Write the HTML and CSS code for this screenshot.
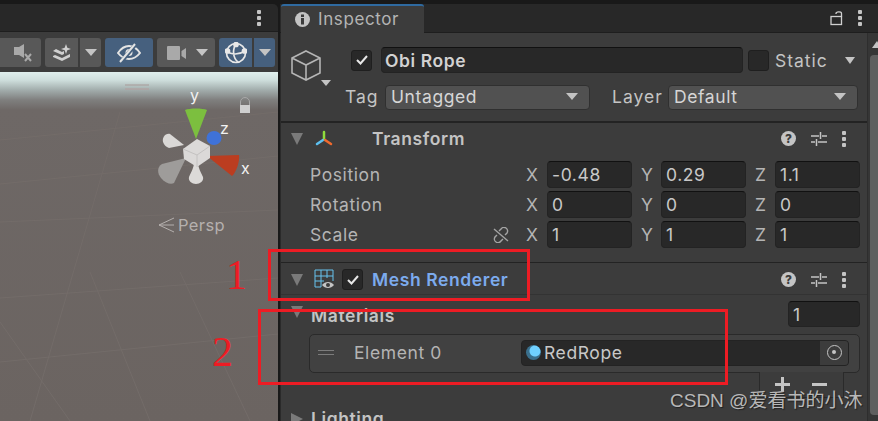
FILE: index.html
```html
<!DOCTYPE html>
<html lang="en">
<head>
  <meta charset="UTF-8" />
  <title>Inspector</title>
  <link rel="stylesheet" href="styles.css">
</head>
<body>
  <div class="app">
    <section class="scene">
      <div class="scene-tabs"><span class="dots"><i></i><i></i><i></i></span></div>
      <div class="scene-tools">
        <div class="tool tool-first">
          <svg width="20" height="18" viewBox="0 0 20 18"><path d="M0 3h5l5-3v14l-5-3H0z" fill="#a9a9a9"/><path d="M11 10l6 7M17 10l-6 7" stroke="#a9a9a9" stroke-width="2"/></svg>
        </div>
        <div class="tool tool-layers">
          <svg width="20" height="18" viewBox="0 0 20 18"><path d="M1 7l3-2 6 3 2-1v3l-2 1-9-4zM1 12l2-1 7 3 8-4v3l-8 4-9-4z" fill="#d0d0d0"/><path d="M14 0l1.300 3.700L19 5l-3.700 1.300L14 10l-1.300-3.700L9 5l3.700-1.300z" fill="#d0d0d0"/></svg>
        </div>
        <div class="tool tool-arrow"><b class="tri"></b></div>
        <div class="tool tool-eye on">
          <svg width="24" height="20" viewBox="0 0 24 20"><path d="M1 10c4-6 8-7 11-7s7 1 11 7c-4 5-8 6-11 6s-7-1-11-6z" fill="none" stroke="#e4e4e4" stroke-width="2"/><circle cx="12" cy="9.500" r="3.500" fill="#e4e4e4"/><path d="M4 19L19 1" stroke="#46607e" stroke-width="4"/><path d="M3 19L18 1" stroke="#e4e4e4" stroke-width="2"/></svg>
        </div>
        <div class="tool tool-cam">
          <svg width="20" height="14" viewBox="0 0 20 14"><rect width="13" height="14" rx="1" fill="#a9a9a9"/><path d="M14.500 5l4.500-3v11l-4.500-3z" fill="#a9a9a9"/></svg>
          <b class="tri"></b>
        </div>
        <div class="tool tool-gizmo on">
          <svg width="22" height="22" viewBox="0 0 22 22" fill="none" stroke="#e8e8e8" stroke-width="1.700"><circle cx="11" cy="11" r="9.500"/><path d="M2 9c4 4 12 4 18 0M11 2C7 8 8 16 13 20"/><circle cx="11" cy="2.500" r="2" fill="#e8e8e8"/><circle cx="2.500" cy="9" r="2" fill="#e8e8e8"/><circle cx="19.500" cy="9" r="2" fill="#e8e8e8"/></svg>
        </div>
        <div class="tool tool-arrow on"><b class="tri"></b></div>
      </div>
      <div class="viewport">
        <svg class="grid" width="278" height="349" viewBox="0 0 278 349" fill="none" stroke="#736c69" stroke-width="1">
          <path d="M0 68L278 40M0 112L278 84M0 150L278 138M0 226L278 206M0 290L278 262"/>
          <path d="M30 349L120 40M150 349L90 200M250 349L180 200M0 250L70 349"/>
        </svg>
        <svg class="gizmo" width="160" height="125" viewBox="0 0 160 125">
          <path d="M5 5H29" stroke="#a89a98" stroke-width="1"/><path d="M5 9H29" stroke="#b59c9c" stroke-width="1"/>
          <path d="M120.500 26v-4a4.500 4.500 0 0 1 9 0v4" fill="none" stroke="#a8a8a8" stroke-width="1"/><rect x="120" y="25" width="10" height="8" fill="#cfcfcf"/>
          <path d="M65 30c4-2 18-2 22 0L76 59z" fill="#7cbf3f"/>
          <ellipse cx="94" cy="58" rx="7.500" ry="7" fill="#3f72d8"/>
          <path d="M87 76l32-1c1 6-3 18-7 21z" fill="#bb3d20"/>
          <path d="M64 65L50 54c-5-1-8 4-7 8 1 3 3 5 6 6z" fill="#dad8d6"/>
          <path d="M66 78L42 84c-5 3-5 9-1 14 4 5 10 7 13 5z" fill="#9e9c9a"/>
          <path d="M74 82c0 6-3 10-5 15-1 4 3 7 7 7s8-3 7-7c-2-5-5-9-5-15z" fill="#dcdad8"/>
          <path d="M63 69l14-10 13 7v12l-13 9-13-8z" fill="#dbd9d8"/>
          <path d="M63 69l14 6 13-9M77 75v12" fill="none" stroke="#c4c2c1" stroke-width="1"/>
          <text x="70" y="21" class="axis">y</text>
          <text x="100" y="54" class="axis">z</text>
          <text x="121" y="94" class="axis">x</text>
        </svg>
        <div class="persp">
          <svg width="16" height="16" viewBox="0 0 16 16" fill="none" stroke="#b5b0ae" stroke-width="1"><path d="M16 1L1 8l15 7M1 8h15"/></svg>
          <span>Persp</span>
        </div>
      </div>
    </section>

    <section class="inspector">
      <div class="insp-tabs">
        <div class="insp-tab">
          <svg width="15" height="15" viewBox="0 0 15 15"><circle cx="7.500" cy="7.500" r="7.500" fill="#c4c4c4"/><rect x="6" y="6" width="3" height="6.500" fill="#3c3c3c"/><rect x="6" y="2.500" width="3" height="2.500" fill="#3c3c3c"/></svg>
          <span>Inspector</span>
        </div>
        <div class="insp-tab-tools">
          <svg width="13" height="16" viewBox="0 0 13 16" fill="none" stroke="#d0d0d0" stroke-width="1.300"><rect x="1" y="6.500" width="10.500" height="8"/><path d="M6 4V3.500C6 1.500 11.500 1 11.500 3.500V6.500"/></svg>
          <span class="dots"><i></i><i></i><i></i></span>
        </div>
      </div>
      <div class="insp-main">
        <div class="insp-body">
          <div class="go-head">
            <div class="cube-col">
              <svg width="30" height="31" viewBox="0 0 30 31" fill="none" stroke="#b5b5b5" stroke-width="1.600"><path d="M15 1l14 7v15l-14 7-14-7V8zM1 8l14 7 14-7M15 15v15"/></svg>
              <b class="tri tri-sm"></b>
            </div>
            <div class="go-rows">
              <div class="go-row">
                <span class="check"><svg class="tick" width="12" height="10" viewBox="0 0 12 10"><path d="M1 5l3.500 3.500L11 1" fill="none" stroke="#e8e8e8" stroke-width="2"/></svg></span>
                <div class="field name-field">Obi Rope</div>
                <span class="check"></span>
                <span class="static lbl-wide">Static</span>
                <b class="tri tri-static"></b>
              </div>
              <div class="go-row tag-row">
                <span class="lbl lbl-wide tag-lbl">Tag</span>
                <div class="drop tag-drop">Untagged<b class="tri"></b></div>
                <span class="lbl lbl-wide layer-lbl">Layer</span>
                <div class="drop layer-drop">Default<b class="tri"></b></div>
              </div>
            </div>
          </div>

          <div class="comp-head transform-head">
            <b class="tri fold"></b>
            <svg class="comp-icon" width="20" height="18" viewBox="0 0 20 18" fill="none" stroke-width="2.500" stroke-linecap="round"><path d="M10 2v7" stroke="#8fdc3c"/><path d="M9 10l-6 4" stroke="#5cc0f0"/><path d="M11 10l6 4" stroke="#ef6a2e"/></svg>
            <span class="comp-title transform-title">Transform</span>
            <span class="comp-tools">
              <span class="help">?</span>
              <svg width="16" height="14" viewBox="0 0 16 14" stroke="#c4c4c4" stroke-width="1.500"><path d="M0 4h8M11 4h5M0 10h4M7 10h9M9.500 0v7M5.500 7v7"/></svg>
              <span class="dots"><i></i><i></i><i></i></span>
            </span>
          </div>
          <div class="vec-rows">
            <div class="vec-row">
              <span class="vec-name">Position</span>
              <span class="axis-lbl">X</span><div class="field num">-0.48</div>
              <span class="axis-lbl">Y</span><div class="field num">0.29</div>
              <span class="axis-lbl">Z</span><div class="field num">1.1</div>
            </div>
            <div class="vec-row">
              <span class="vec-name">Rotation</span>
              <span class="axis-lbl">X</span><div class="field num">0</div>
              <span class="axis-lbl">Y</span><div class="field num">0</div>
              <span class="axis-lbl">Z</span><div class="field num">0</div>
            </div>
            <div class="vec-row">
              <span class="vec-name">Scale</span>
              <svg class="link" width="18" height="16" viewBox="0 0 18 16" fill="none" stroke="#a4a4a4" stroke-width="1.400"><path d="M7 4l2-2a3.500 3.500 0 0 1 6 4l-2 2M11 12l-2 2a3.500 3.500 0 0 1-6-4l2-2M2 2l14 12"/></svg>
              <span class="axis-lbl">X</span><div class="field num">1</div>
              <span class="axis-lbl">Y</span><div class="field num">1</div>
              <span class="axis-lbl">Z</span><div class="field num">1</div>
            </div>
          </div>

          <div class="comp-head mesh-head">
            <b class="tri fold"></b>
            <svg class="comp-icon" width="21" height="21" viewBox="0 0 21 21" fill="none"><path d="M1 1h18v11M1 1v17h6M7 1v17M13 1v8M1 7h18M1 12h9" stroke="#66c3ee" stroke-width="1"/><path d="M8 16c3-4 9-4 12 0-3 4-9 4-12 0z" fill="#c4c4c4"/><circle cx="14" cy="16" r="2" fill="#3c3c3c"/></svg>
            <span class="check"><svg class="tick" width="12" height="10" viewBox="0 0 12 10"><path d="M1 5l3.500 3.500L11 1" fill="none" stroke="#e8e8e8" stroke-width="2"/></svg></span>
            <span class="comp-title mesh-title">Mesh Renderer</span>
            <span class="comp-tools">
              <span class="help">?</span>
              <svg width="16" height="14" viewBox="0 0 16 14" stroke="#c4c4c4" stroke-width="1.500"><path d="M0 4h8M11 4h5M0 10h4M7 10h9M9.500 0v7M5.500 7v7"/></svg>
              <span class="dots"><i></i><i></i><i></i></span>
            </span>
          </div>
          <div class="mat-head">
            <b class="tri fold"></b>
            <span class="bold-lbl">Materials</span>
            <div class="field num count">1</div>
          </div>
          <div class="element">
            <span class="handle"></span>
            <span class="el-name">Element 0</span>
            <div class="obj-field">
              <span class="ball"></span>
              <span class="obj-name">RedRope</span>
              <span class="picker"><i></i></span>
            </div>
          </div>
          <div class="plusminus"><i class="plus"></i><i class="minus"></i></div>
          <div class="lighting">
            <b class="tri-right"></b>
            <span class="bold-lbl">Lighting</span>
          </div>
        </div>
        <div class="scrollbar"><b class="tri-up"></b><div class="thumb"></div></div>
      </div>
    </section>
  </div>

  <div class="mark box1"></div>
  <div class="mark box2"></div>
  <span class="mark-num num1">1</span>
  <span class="mark-num num2">2</span>
  <span class="watermark">CSDN @爱看书的小沐</span>
</body>
</html>
```

FILE: styles.css
```css
* { margin: 0; padding: 0; box-sizing: border-box; }
html, body { width: 878px; height: 421px; overflow: hidden; }
body {
  position: relative;
  font-family: 'Inter', 'Noto Sans', sans-serif;
  font-size: 17.500px;
  letter-spacing: 0.6px;
  color: #c4c4c4;
  background: #191919;
}
.app { display: flex; height: 421px; padding-top: 4px; overflow: hidden; }

/* shared bits */
.dots { display: inline-flex; flex-direction: column; gap: 2px; }
.dots i { width: 4px; height: 4px; background: #c4c4c4; border-radius: 1px; }
.tri {
  display: block;
  width: 0;
  height: 0;
  border-left: 6px solid transparent;
  border-right: 6px solid transparent;
  border-top: 7px solid #c4c4c4;
}
.tri.fold { border-top-color: #7a7a7a; border-left-width: 6.500px; border-right-width: 6.500px; border-top-width: 12px; }
.tri-right {
  display: block;
  width: 0;
  height: 0;
  border-top: 6px solid transparent;
  border-bottom: 6px solid transparent;
  border-left: 12px solid #7a7a7a;
}

/* scene side */
.scene { width: 278px; display: flex; flex-direction: column; flex: none; }
.scene-tabs {
  height: 28px;
  background: #282828;
  border-bottom: 1px solid #1e1e1e;
  border-radius: 0 5px 0 0;
  display: flex;
  align-items: center;
  justify-content: flex-end;
  padding-right: 17px;
}
.scene-tools {
  height: 40px;
  background: #3c3c3c;
  display: flex;
  align-items: center;
  gap: 4px;
  padding-top: 1px;
}
.tool {
  height: 29px;
  background: #585858;
  border-radius: 3px;
  display: flex;
  align-items: center;
  justify-content: center;
}
.tool.on { background: #46607e; }
.tool-first { width: 41px; border-radius: 0 3px 3px 0; padding-left: 6px; }
.tool-layers { width: 33px; border-radius: 3px 0 0 3px; }
.tool-arrow { width: 21px; margin-left: -2px; border-radius: 0 3px 3px 0; }
.tool-eye { width: 48px; }
.tool-cam { width: 58px; gap: 9px; padding-left: 2px; }
.tool-gizmo { width: 33px; border-radius: 3px 0 0 3px; }
.viewport {
  flex: 1;
  position: relative;
  overflow: hidden;
  background:
    linear-gradient(to bottom, #e0efed 0, #cfdfdd 8px, #a2adac 18px, #7f7f7e 28px, #6e6866 38px, #6b6461 100%);
}
.grid { position: absolute; left: 0; top: 0; }
.gizmo { position: absolute; left: 120px; top: 8px; }
.axis { font-size: 16px; fill: #f2f2f2; letter-spacing: 0; }
.persp {
  position: absolute;
  left: 158px;
  top: 143px;
  display: flex;
  align-items: center;
  gap: 4px;
  color: #b5b0ae;
  font-size: 16.500px;
  letter-spacing: 0.4px;
}

/* inspector */
.inspector {
  flex: 1;
  margin-left: 2px;
  display: flex;
  flex-direction: column;
  min-width: 0;
}
.insp-tabs {
  height: 29px;
  flex: none;
  background: #282828;
  border-bottom: 1px solid #1e1e1e;
  display: flex;
  justify-content: space-between;
  align-items: center;
  padding-left: 1px;
  padding-right: 16px;
}
.insp-tab {
  width: 143px;
  height: 29px;
  background: #3c3c3c;
  border-top: 2px solid #2f6aa0;
  border-radius: 3px 3px 0 0;
  display: flex;
  align-items: center;
  gap: 8px;
  padding-left: 14px;
  font-size: 17px;
  color: #b4b4b4;
}
.insp-tab-tools { display: flex; align-items: center; gap: 15px; }
.insp-main { flex: 1; display: flex; min-height: 0; overflow: hidden; background: #3c3c3c; border-left: 1px solid #2a2a2a; }
.insp-body { flex: 1; min-width: 0; overflow: hidden; }
.scrollbar {
  width: 11px;
  flex: none;
  background: #363636;
  border-left: 1px solid #2e2e2e;
}
.tri-up {
  display: block;
  width: 0;
  height: 0;
  margin: 8px 0 0 4px;
  border-left: 5px solid transparent;
  border-right: 5px solid transparent;
  border-bottom: 7px solid #c4c4c4;
}
.thumb { margin: 7px 0 0 2px; height: 360px; background: #5f5f5f; border-radius: 4px 0 0 4px; }

.go-head {
  height: 90px;
  display: flex;
  padding: 14px 0 0 10px;
  border-bottom: 2px solid #232323;
}
.cube-col { width: 60px; position: relative; flex: none; padding-top: 3px; }
.tri-sm {
  position: absolute;
  left: 30px;
  top: 33px;
  border-left-width: 5px;
  border-right-width: 5px;
  border-top-width: 6px;
}
.go-rows { flex: 1; }
.go-row { display: flex; align-items: center; height: 26px; }
.tag-row { margin-top: 11px; }
.check {
  width: 21px;
  height: 21px;
  background: #282828;
  border: 1px solid #1f1f1f;
  border-radius: 3px;
  display: inline-flex;
  align-items: center;
  justify-content: center;
  flex: none;
}
.field {
  background: #282828;
  border: 1px solid #232323;
  border-top: 1px solid #111;
  border-radius: 4px;
  display: flex;
  align-items: center;
  color: #d2d2d2;
}
.name-field {
  width: 362px;
  height: 26px;
  margin: 0 5px 0 9px;
  padding-left: 3px;
  font-weight: 600;
}
.lbl-wide { letter-spacing: 1px; }
.static { margin-left: 6px; width: 70px; }
.tri-static { border-left-width: 5.500px; border-right-width: 5.500px; }
.lbl { display: block; padding-bottom: 1px; }
.tag-lbl { width: 40px; margin-left: -6px; }
.layer-lbl { width: 56px; }
.drop {
  height: 25px;
  background: #515151;
  border: 1px solid #303030;
  border-radius: 4px;
  padding: 0 11px 1px 5px;
  display: flex;
  align-items: center;
  justify-content: space-between;
  color: #d6d6d6;
}
.tag-drop { width: 205px; margin-right: 22px; }
.layer-drop { width: 190px; }

.comp-head {
  height: 32px;
  display: flex;
  align-items: center;
  padding-left: 10px;
  padding-right: 21px;
}
.transform-head { height: 31px; }
.comp-icon { margin-left: 11px; flex: none; }
.comp-title { font-weight: 600; }
.transform-title { margin-left: 38px; }
.comp-tools { margin-left: auto; display: flex; align-items: center; gap: 15px; }
.help {
  width: 15px;
  height: 15px;
  border-radius: 50%;
  background: #c4c4c4;
  color: #3c3c3c;
  font-size: 12px;
  font-weight: 800;
  letter-spacing: 0;
  display: flex;
  align-items: center;
  justify-content: center;
}
.vec-rows { padding: 7px 7px 0 29px; display: flex; flex-direction: column; gap: 3px; height: 109px; border-bottom: 1px solid #232323; }
.vec-row { display: flex; align-items: center; height: 27px; position: relative; }
.vec-name { width: 216px; flex: none; color: #b4b4b4; }
.link { position: absolute; left: 182px; top: 6px; }
.axis-lbl { width: 21px; flex: none; color: #b4b4b4; }
.axis-lbl ~ .axis-lbl { margin-left: 9px; width: 20px; }
.num { width: 85px; height: 27px; padding-left: 4px; color: #c8c8c8; flex: none; }

.mesh-head { height: 32px; padding-top: 2px; border-bottom: 1px solid #333; }
.mesh-head .comp-icon { margin-right: 7px; }
.mesh-title { color: #7cabee; margin-left: 9px; }
.mat-head { height: 39px; display: flex; align-items: center; padding-left: 10px; position: relative; }
.bold-lbl { font-weight: 600; margin-left: 8px; color: #c4c4c4; }
.mat-head .fold { margin-bottom: 6px; }
.mat-head .bold-lbl { margin-top: 2px; }
.count { position: absolute; left: 507px; top: 6px; width: 72px; height: 26px; }
.element {
  height: 39px;
  margin: 0 7px 0 28px;
  background: #414141;
  border: 1px solid #2a2a2a;
  border-radius: 5px;
  display: flex;
  align-items: center;
  padding: 0 0 2px 8px;
}
.handle { width: 16px; height: 5px; border-top: 1px solid #7c7c7c; border-bottom: 1px solid #7c7c7c; flex: none; }
.el-name { width: 167px; margin-left: 20px; flex: none; color: #b4b4b4; }
.obj-field {
  width: 328px;
  height: 26px;
  background: #282828;
  border: 1px solid #232323;
  border-radius: 4px;
  display: flex;
  align-items: center;
  padding-left: 4px;
  overflow: hidden;
}
.ball {
  width: 15px;
  height: 15px;
  border-radius: 50%;
  flex: none;
  background: radial-gradient(circle at 60% 40%, #6fd0ff 0 5px, #3a6f8c 6px);
}
.obj-name { margin-left: 3px; flex: 1; color: #c8c8c8; }
.picker {
  width: 28px;
  height: 100%;
  background: #3c3c3c;
  display: flex;
  align-items: center;
  justify-content: center;
}
.picker i {
  width: 15px;
  height: 15px;
  border: 1.500px solid #c4c4c4;
  border-radius: 50%;
  position: relative;
}
.picker i::after {
  content: "";
  position: absolute;
  left: 4px;
  top: 4px;
  width: 4px;
  height: 4px;
  border-radius: 50%;
  background: #c4c4c4;
}
.plusminus {
  width: 85px;
  height: 26px;
  margin-left: 478px;
  margin-top: -1px;
  border: 1px solid #2a2a2a;
  border-top: 0;
  background: #3c3c3c;
  display: flex;
  align-items: center;
  gap: 22px;
  padding-left: 15px;
}
.plus, .minus { display: block; position: relative; width: 15px; height: 3px; background: #c4c4c4; }
.plus::after {
  content: "";
  position: absolute;
  left: 6px;
  top: -6px;
  width: 3px;
  height: 15px;
  background: #c4c4c4;
}
.lighting { display: flex; align-items: center; padding-left: 10px; margin-top: 10px; }

/* annotations over the screenshot */
.mark { position: absolute; border: 3px solid #ed1c24; }
.box1 { left: 268px; top: 249px; width: 262px; height: 52px; }
.box2 { left: 258px; top: 309px; width: 470px; height: 76px; }
.mark-num {
  position: absolute;
  font-family: 'Liberation Serif', serif;
  font-size: 42px;
  line-height: 42px;
  letter-spacing: 0;
  color: #ed1c24;
}
.num1 { left: 226px; top: 254px; }
.num2 { left: 212px; top: 331px; }
.watermark {
  position: absolute;
  left: 670px;
  top: 390px;
  font-family: 'Liberation Sans', 'Noto Sans CJK SC', sans-serif;
  font-size: 19px;
  letter-spacing: 0;
  line-height: 22px;
  color: #b8b8b8;
  text-shadow: 1px 1px 1px #222;
  white-space: nowrap;
}
```
